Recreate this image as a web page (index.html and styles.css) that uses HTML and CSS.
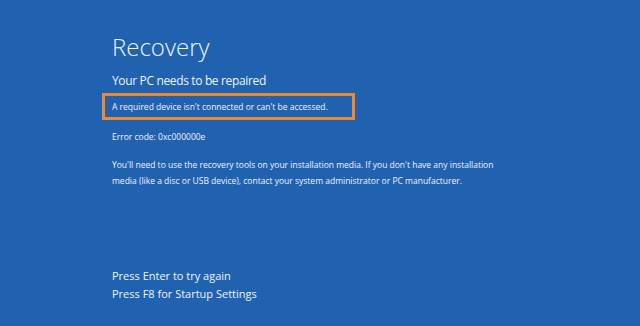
FILE: index.html
```html
<!DOCTYPE html>
<html lang="en">
<head>
  <meta charset="UTF-8">
  <title>Recovery</title>
  <link rel="stylesheet" href="styles.css">
</head>
<body>

  <div class="screen">
    <h1>Recovery</h1>
    <h2>Your PC needs to be repaired</h2>

    <p class="highlight">A required device isn't connected or can't be accessed.</p>

    <p class="code">Error code: 0xc000000e</p>

    <p class="info">You'll need to use the recovery tools on your installation media. If you don't have any installation<br>
      media (like a disc or USB device), contact your system administrator or PC manufacturer.</p>

    <div class="keys">
      <p>Press Enter to try again</p>
      <p>Press F8 for Startup Settings</p>
    </div>
  </div>

</body>
</html>
```

FILE: styles.css
```css
html, body {
  margin: 0;
  height: 100%;
}

body {
  font-family: 'Open Sans', sans-serif;
  background-color: #2062b0;
  color: #eef3fa;
}

.screen {
  padding: 29px 0 0 112px;
}

h1 {
  font-size: 24px;
  font-weight: 300;
  margin: 0;
  line-height: 36px;
}

h2 {
  font-size: 12px;
  font-weight: 400;
  letter-spacing: -0.35px;
  margin: 7px 0 0;
  line-height: 18px;
}

p {
  margin: 0;
}

.highlight {
  display: inline-block;
  margin: 3px 0 0 -10px;
  padding: 3px 24px 3px 7px;
  border: 3px solid #f0892c;
  font-size: 8.5px;
  line-height: 15px;
}

.code {
  margin-top: 10px;
  font-size: 8.5px;
  line-height: 14px;
}

.info {
  margin-top: 13px;
  font-size: 8.5px;
  line-height: 16px;
}

.keys {
  margin-top: 78px;
  font-size: 11px;
  line-height: 18px;
}
```
